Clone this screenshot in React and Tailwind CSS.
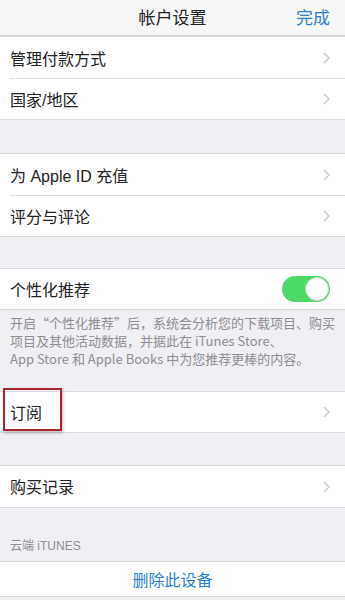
import React from "react";

const font = { fontFamily: '"Liberation Sans", "Noto Sans CJK SC", sans-serif' };
const cjk = { fontFamily: '"Noto Sans CJK SC", sans-serif' };

function Chevron() {
  return (
    <svg width="7" height="12" viewBox="0 0 7 12" className="shrink-0">
      <path d="M1 1l5 5-5 5" fill="none" stroke="#c7c7cc" strokeWidth="1.3" />
    </svg>
  );
}

function Row({ label, h = "h-[42px]", sep = false, children }) {
  return (
    <div className={`relative flex items-center justify-between bg-white pl-[10px] pr-[15px] ${h}`}>
      <span className="pt-[3px] text-[16px] text-[#222]">{label}</span>
      {children ?? <Chevron />}
      {sep && <div className="absolute bottom-0 left-[10px] right-0 h-px bg-[#e0e0e4]" />}
    </div>
  );
}

function Group({ children }) {
  return <div className="border-y border-[#dcdce0]">{children}</div>;
}

function Toggle() {
  return (
    <div className="flex h-[26px] w-[48px] items-center justify-end rounded-full bg-[#4cd964] p-px">
      <div className="h-[24px] w-[24px] rounded-full border border-[#d0d0d0] bg-white" />
    </div>
  );
}

export default function App() {
  return (
    <div className="h-[600px] w-[345px] overflow-hidden bg-[#efeff4]" style={font}>
      <div className="relative flex h-[36px] items-center justify-center border-b border-[#d6d6da] bg-[#f7f7f8] pt-[2px]">
        <span className="text-[17px] text-[#222]">帐户设置</span>
        <span className="absolute right-[15px] text-[17px] text-[#2d7fd2]">完成</span>
      </div>

      <Group>
        <Row label="管理付款方式" sep />
        <Row label="国家/地区" h="h-[40px]" />
      </Group>

      <div className="h-[33px]" />

      <Group>
        <Row label="为 Apple ID 充值" sep />
        <Row label="评分与评论" h="h-[40px]" />
      </Group>

      <div className="h-[31px]" />

      <Group>
        <Row label="个性化推荐" h="h-[40px]">
          <Toggle />
        </Row>
      </Group>

      <div
        className="h-[81px] whitespace-nowrap px-[10px] pt-[4px] text-[13px] leading-[18px] text-[#8e8e93]"
        style={cjk}
      >
        开启“个性化推荐”后，系统会分析您的下载项目、购买
        <br />
        项目及其他活动数据，并据此在 iTunes Store、
        <br />
        App Store 和 Apple Books 中为您推荐更棒的内容。
      </div>

      <Group>
        <div className="relative">
          <Row label="订阅" h="h-[40px]" />
          <div className="absolute left-[3px] top-[-4px] h-[43px] w-[59px] border-2 border-[#a8262d] shadow-[1px_2px_3px_rgba(0,0,0,0.25)]" />
        </div>
      </Group>

      <div className="h-[32px]" />

      <Group>
        <Row label="购买记录" h="h-[41px]" />
      </Group>

      <div className="flex h-[53px] items-end px-[10px] pb-[6px] text-[12px] text-[#8e8e93]">
        云端 iTUNES
      </div>

      <Group>
        <div className="flex h-[34px] items-center justify-center bg-white pt-[4px] text-[16px] text-[#2d7fd2]">
          删除此设备
        </div>
      </Group>
    </div>
  );
}
